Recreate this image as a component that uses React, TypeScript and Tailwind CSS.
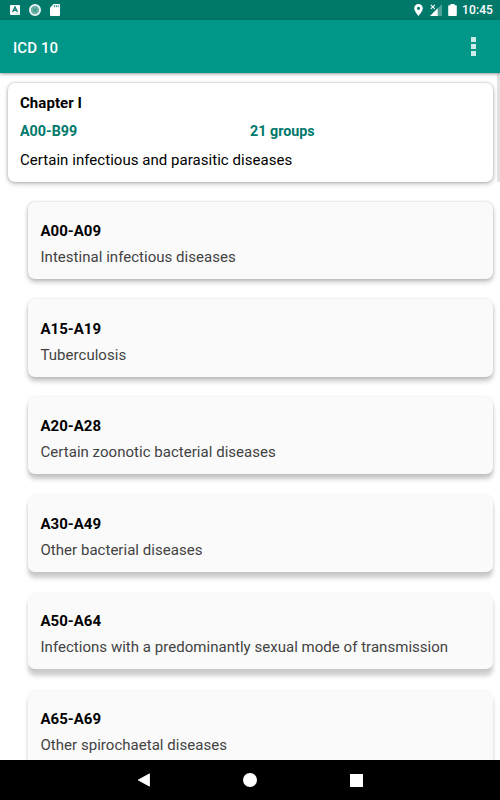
import type { ReactNode } from "react";

type Group = { code: string; name: string; shadow: string };

const groups: Group[] = [
  {
    code: "A00-A09",
    name: "Intestinal infectious diseases",
    shadow: "shadow-[0_0_3px_rgba(0,0,0,0.16),0_3px_5px_rgba(0,0,0,0.24)]",
  },
  {
    code: "A15-A19",
    name: "Tuberculosis",
    shadow: "shadow-[0_0_3px_rgba(0,0,0,0.12),0_4px_5px_rgba(0,0,0,0.24)]",
  },
  {
    code: "A20-A28",
    name: "Certain zoonotic bacterial diseases",
    shadow: "shadow-[0_0_3px_rgba(0,0,0,0.1),0_5px_4px_rgba(0,0,0,0.22)]",
  },
  {
    code: "A30-A49",
    name: "Other bacterial diseases",
    shadow: "shadow-[0_1px_3px_rgba(0,0,0,0.06),0_6px_4px_rgba(0,0,0,0.2)]",
  },
  {
    code: "A50-A64",
    name: "Infections with a predominantly sexual mode of transmission",
    shadow: "shadow-[0_2px_3px_rgba(0,0,0,0.04),0_7px_4px_rgba(0,0,0,0.19)]",
  },
  {
    code: "A65-A69",
    name: "Other spirochaetal diseases",
    shadow: "shadow-[0_3px_3px_rgba(0,0,0,0.04),0_7px_4px_rgba(0,0,0,0.19)]",
  },
];

function StatusBar() {
  return (
    <div className="flex h-5 shrink-0 items-center justify-between bg-[#00796b] pl-2.5 pr-[7px] text-white">
      <div className="flex items-center gap-[9px]">
        <svg width="10" height="10" viewBox="0 0 10 10">
          <rect width="10" height="10" rx="1" fill="#fff" />
          <path d="M2.6 7 5 2l2.4 5M3.5 5.4h3" stroke="#00796b" strokeWidth="1.3" fill="none" />
          <path d="M5 8.6h4" stroke="#00796b" strokeOpacity="0.4" strokeWidth="0.6" />
        </svg>
        <svg width="12" height="12" viewBox="0 0 12 12">
          <circle cx="6" cy="6" r="5.1" fill="#69b0a6" stroke="#eef7f6" strokeWidth="1.8" />
          <circle cx="6" cy="6" r="2" fill="#4ba093" />
        </svg>
        <svg width="10" height="12" viewBox="0 0 10 12">
          <path d="M3.6 0H9a1 1 0 0 1 1 1v10a1 1 0 0 1-1 1H1a1 1 0 0 1-1-1V3.7z" fill="#fff" />
          <path d="M4.4 1.2v2M6.3 1.2v2M8.2 1.2v2" stroke="#00796b" strokeWidth="0.9" />
        </svg>
      </div>
      <div className="flex items-center">
        <svg className="mr-[6.5px]" width="9" height="12" viewBox="0 0 9 12">
          <path
            d="M4.5 0A4.3 4.3 0 0 0 .2 4.3C.2 7.5 4.5 12 4.5 12s4.3-4.5 4.3-7.7A4.3 4.3 0 0 0 4.5 0zm0 5.9a1.6 1.6 0 1 1 0-3.2 1.6 1.6 0 0 1 0 3.2z"
            fill="#fff"
          />
        </svg>
        <svg className="mr-[5.5px]" width="13" height="12" viewBox="0 0 13 12">
          <path d="M12 0v12H0z" fill="#fff" fillOpacity="0.3" />
          <path d="M7.7 4.3V12H0z" fill="#fff" />
          <path d="M.8.8l4 4M4.8.8l-4 4" stroke="#00796b" strokeWidth="2.4" />
          <path d="M.8.8l4 4M4.8.8l-4 4" stroke="#fff" strokeWidth="1.1" />
        </svg>
        <svg className="mr-[5px]" width="9" height="12" viewBox="0 0 9 12">
          <path d="M2.5 0h4v1.2H8a.8.8 0 0 1 .8.8v9.2a.8.8 0 0 1-.8.8H1a.8.8 0 0 1-.8-.8V2a.8.8 0 0 1 .8-.8h1.5z" fill="#fff" />
        </svg>
        <span className="text-[12px] font-medium leading-5 tracking-[0.1px]">10:45</span>
      </div>
    </div>
  );
}

function AppBar() {
  return (
    <header className="z-10 flex h-[53px] shrink-0 items-center justify-between bg-[#009688] pl-[13px] pr-6 shadow-[0_1px_3px_rgba(0,0,0,0.4)]">
      <h1 className="pt-[2px] text-[15px] font-medium leading-5 tracking-[0.1px] text-white">ICD 10</h1>
      <div className="flex flex-col gap-[2px]">
        <span className="size-[5px] bg-[#cceae7]" />
        <span className="size-[5px] bg-[#cceae7]" />
        <span className="size-[5px] bg-[#cceae7]" />
      </div>
    </header>
  );
}

function Card({ className, children }: { className: string; children: ReactNode }) {
  return <section className={`shrink-0 rounded-[7px] ${className}`}>{children}</section>;
}

function NavBar() {
  return (
    <nav className="z-10 flex h-10 shrink-0 items-center bg-black pl-[137px]">
      <svg width="13" height="14" viewBox="0 0 13 14">
        <path d="M12.5 .8v12.4L1.2 7z" fill="#fff" stroke="#fff" strokeWidth="0.8" strokeLinejoin="round" />
      </svg>
      <span className="ml-[93px] size-[13.5px] rounded-full bg-white" />
      <span className="ml-[93.5px] mt-px size-[12.5px] bg-white" />
    </nav>
  );
}

export default function App() {
  return (
    <div className="flex h-[800px] w-[500px] flex-col overflow-hidden bg-white font-['Roboto','Liberation_Sans',sans-serif] text-[15px] leading-5 text-black">
      <StatusBar />
      <AppBar />
      <main className="flex min-h-0 flex-1 overflow-hidden">
        <div className="flex w-[497px] shrink-0 flex-col gap-5 pl-[7.5px] pr-[4.5px] pt-[10px]">
          <Card className="h-[98.5px] bg-white pl-[12.5px] pt-[9.5px] shadow-[0_0_3px_rgba(0,0,0,0.25),0_2px_5px_rgba(0,0,0,0.22)]">
            <h2 className="font-bold tracking-[0.05px]">Chapter I</h2>
            <div className="mt-[8.5px] grid grid-cols-[230px_1fr] text-[14.3px] font-bold text-[#00796b]">
              <span>A00-B99</span>
              <span>21 groups</span>
            </div>
            <p className="mt-[9px] tracking-[0.04px]">Certain infectious and parasitic diseases</p>
          </Card>
          {groups.map((g) => (
            <Card key={g.code} className={`ml-[20.5px] h-[77.5px] bg-[#fafafa] pl-[12.5px] pt-[19.6px] ${g.shadow}`}>
              <h3 className="font-bold">{g.code}</h3>
              <p className="mt-[6.4px] tracking-[0.03px] text-[#424242]">{g.name}</p>
            </Card>
          ))}
        </div>
        {/* scrollbar thumb */}
        <div className="h-[109px] w-[3px] bg-[#e2e2e2]" />
      </main>
      <NavBar />
    </div>
  );
}
